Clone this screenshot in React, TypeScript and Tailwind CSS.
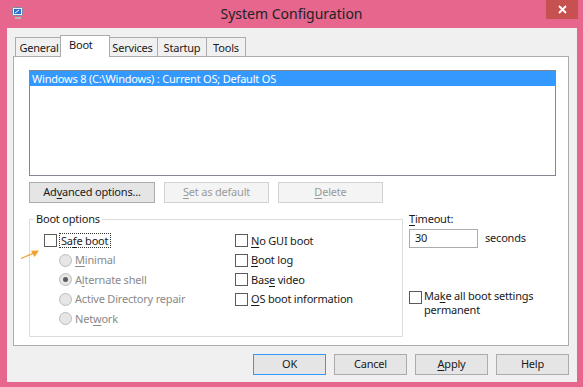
import React from 'react';

const FONT = { fontFamily: '"Noto Sans", "Open Sans", sans-serif' };

// letter with access-key underline
const U = ( { children }: { children: React.ReactNode } ) => <span className="underline underline-offset-[2px]">{children}</span>;

const Checkbox = () => (
  <span className="inline-block w-[13px] h-[13px] shrink-0 border border-[#5a5a5a] bg-white" />
);

const Radio = ( { checked = false }: { checked?: boolean } ) => (
  <span className="w-[13px] h-[13px] shrink-0 rounded-full border border-[#bcbcbc] bg-[#e6e6e6] flex items-center justify-center">
    {checked && <span className="w-[5px] h-[5px] rounded-full bg-[#5c5c5c]" />}
  </span>
);

const WinButton = ( { children, width, disabled = false, isDefault = false }: { children: React.ReactNode; width: string; disabled?: boolean; isDefault?: boolean } ) => (
  <div
    className={`${width} h-[21px] flex items-center justify-center border ${disabled
      ? 'bg-[#f4f4f4] border-[#d2d2d2] text-[#9a9a9a]'
      : isDefault
        ? 'bg-[#e5e5e5] border-[#3399ff] text-[#1a1a1a]'
        : 'bg-[#e5e5e5] border-[#acacac] text-[#1a1a1a]'
      }`}
  >
    {children}
  </div>
);

const TABS = [
  { name: 'General', cls: 'w-[48px]' },
  { name: 'Boot', cls: 'w-[50px]' },
  { name: 'Services', cls: 'w-[51px] -ml-[3px]' },
  { name: 'Startup', cls: 'w-[50px] -ml-px' },
  { name: 'Tools', cls: 'w-[40px] -ml-px' },
];

export default function App() {
  return (
    <div className="relative w-[583px] h-[387px] bg-[#e6668e] flex flex-col overflow-hidden" style={FONT}>
      {/* title bar */}
      <div className="relative h-[28px] shrink-0 flex items-center justify-center">
        <svg className="absolute left-[12px] top-[7px]" width="12" height="13" viewBox="0 0 12 13">
          <rect x="0.5" y="0.5" width="10" height="8" rx="1" fill="#e8eef6" stroke="#7b8aa0" />
          <rect x="2" y="2" width="7" height="5" fill="#2d6fd1" />
          <path d="M3 6 L7 3" stroke="#ffffff" strokeWidth="1" />
          <rect x="3" y="10" width="6" height="2" fill="#b8b8b8" />
        </svg>
        <span className="text-[14px] text-[#222] -mt-[1px]">System Configuration</span>
        <div className="absolute right-[5px] top-0 w-[32px] h-[19px] bg-[#c75050] flex items-center justify-center">
          <svg width="9" height="9" viewBox="0 0 9 9">
            <path d="M1 1 L8 8 M8 1 L1 8" stroke="#ffffff" strokeWidth="1.8" />
          </svg>
        </div>
      </div>

      {/* client area */}
      <div className="ml-[7px] w-[570px] h-[354px] bg-[#f0f0f0] flex flex-col text-[11px] tracking-[-0.2px] text-[#1a1a1a]">
        {/* tab strip */}
        <div className="h-[28px] pt-[7px] pl-[8px] flex items-end">
          {TABS.map( ( tab ) =>
            tab.name === 'Boot' ? (
              <div key={tab.name} className={`${tab.cls} relative z-10 -mb-px -ml-[3px] h-[22px] pl-[8px] bg-white border border-b-0 border-[#acacac] flex items-start`}>
                <span className="leading-[16px] mt-[1px]">{tab.name}</span>
              </div>
            ) : (
              <div key={tab.name} className={`${tab.cls} h-[19px] bg-[#f0f0f0] border border-b-0 border-[#acacac] flex items-center justify-center`}>
                <span className="pt-[2px]">{tab.name}</span>
              </div>
            )
          )}
        </div>

        {/* tab panel */}
        <div className="ml-[6px] w-[556px] h-[290px] shrink-0 bg-white border border-[#acacac] pl-[15px] pt-[13px] flex flex-col">
          <div className="w-[527px] h-[106px] border border-[#828790] bg-white">
            <div className="h-[15px] bg-[#3399ff] text-white pl-[2px] leading-[15px]">
              Windows 8 (C:\Windows) : Current OS; Default OS
            </div>
          </div>

          <div className="mt-[6px] flex gap-[9px]">
            <WinButton width="w-[126px]">Ad<U>v</U>anced options...</WinButton>
            <WinButton width="w-[105px]" disabled><U>S</U>et as default</WinButton>
            <WinButton width="w-[105px]" disabled><U>D</U>elete</WinButton>
          </div>

          <div className="mt-[8px] flex">
            <fieldset className="w-[374px] h-[126px] border border-[#dcdcdc]">
              <legend className="ml-[4px] px-[2px] leading-[16px]">Boot options</legend>
              <div className="pl-[14px] pt-[4px] flex">
                <div className="w-[191px] flex flex-col">
                  <div className="h-[19.5px] flex items-center gap-[1px]">
                    <Checkbox />
                    <span className="ml-[1px] pl-[1px] pr-[2px] h-[15px] leading-[13px] border border-dotted border-[#333]">Sa<U>f</U>e boot</span>
                  </div>
                  {[
                    { label: <><U>M</U>inimal</>, checked: false },
                    { label: <>A<U>l</U>ternate shell</>, checked: true },
                    { label: <>Active Directory repair</>, checked: false },
                    { label: <>Net<U>w</U>ork</>, checked: false },
                  ].map( ( r, i ) => (
                    <div key={i} className="h-[19.5px] pl-[15px] flex items-center gap-[3px] text-[#8a8a8a]">
                      <Radio checked={r.checked} />
                      <span>{r.label}</span>
                    </div>
                  ) )}
                </div>
                <div className="flex flex-col">
                  {[
                    <><U>N</U>o GUI boot</>,
                    <><U>B</U>oot log</>,
                    <>Bas<U>e</U> video</>,
                    <><U>O</U>S boot information</>,
                  ].map( ( label, i ) => (
                    <div key={i} className="h-[19.5px] flex items-center gap-[3px]">
                      <Checkbox />
                      <span>{label}</span>
                    </div>
                  ) )}
                </div>
              </div>
            </fieldset>

            <div className="ml-[6px] flex flex-col">
              <span className="leading-[16px]"><U>T</U>imeout:</span>
              <div className="mt-[2px] flex items-center gap-[7px]">
                <div className="w-[69px] h-[19px] border border-[#acacac] bg-white pl-[5px] flex items-center">30</div>
                <span>seconds</span>
              </div>
              <div className="mt-[42px] flex items-start gap-[2px]">
                <span className="mt-[1px]"><Checkbox /></span>
                <span className="leading-[14px] -mt-[1px]">Ma<U>k</U>e all boot settings<br />permanent</span>
              </div>
            </div>
          </div>
        </div>

        {/* dialog buttons */}
        <div className="mt-[8px] pr-[8px] flex justify-end gap-[8px]">
          <WinButton width="w-[73px]" isDefault>OK</WinButton>
          <WinButton width="w-[73px]">Cancel</WinButton>
          <WinButton width="w-[73px]"><U>A</U>pply</WinButton>
          <WinButton width="w-[73px]">Help</WinButton>
        </div>
      </div>

      {/* annotation arrow */}
      <svg className="absolute left-[19px] top-[248px]" width="22" height="13" viewBox="0 0 22 13">
        <path d="M2 10.5 L15 5" stroke="#f0a030" strokeWidth="1.3" />
        <path d="M20 2.5 L12 2.8 L15.5 9 Z" fill="#f0a030" />
      </svg>
    </div>
  );
}
